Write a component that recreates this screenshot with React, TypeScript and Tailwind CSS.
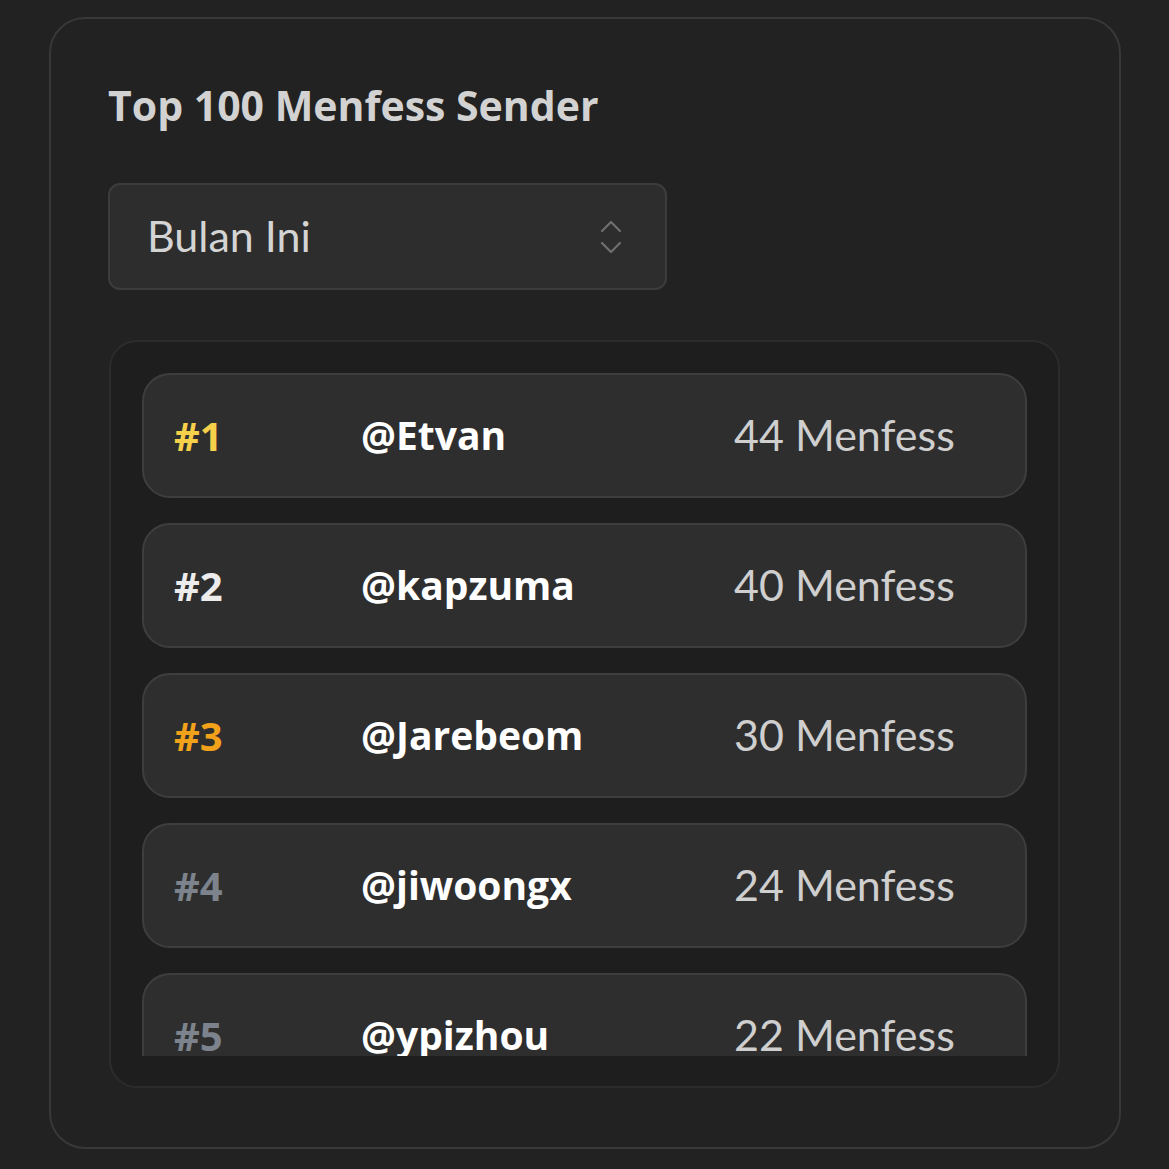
import React from "react";

type Sender = {
  rank: number;
  handle: string;
  count: number;
};

const senders: Sender[] = [
  { rank: 1, handle: "@Etvan", count: 44 },
  { rank: 2, handle: "@kapzuma", count: 40 },
  { rank: 3, handle: "@Jarebeom", count: 30 },
  { rank: 4, handle: "@jiwoongx", count: 24 },
  { rank: 5, handle: "@ypizhou", count: 22 },
];

const rankColors: Record<number, string> = {
  1: "text-[#f6cf4b]",
  2: "text-[#ececec]",
  3: "text-[#f2a11a]",
};

function ChevronUpDown() {
  return (
    <svg width="24" height="38" viewBox="0 0 24 38" fill="none" className="text-[#6f6f6f]">
      <path d="M3 13 L12 4 L21 13" stroke="currentColor" strokeWidth="2.2" strokeLinecap="round" strokeLinejoin="round" />
      <path d="M3 25 L12 34 L21 25" stroke="currentColor" strokeWidth="2.2" strokeLinecap="round" strokeLinejoin="round" />
    </svg>
  );
}

function SenderRow({ sender }: { sender: Sender }) {
  const color = rankColors[sender.rank] ?? "text-[#7c838c]";
  return (
    <div className="shrink-0 h-[125px] rounded-[28px] bg-[#2e2e2e] border-2 border-[#3e3e3e] flex items-center pl-[30px]">
      <span className={`w-[187px] text-[40px] font-bold font-['Open_Sans',sans-serif] ${color}`}>#{sender.rank}</span>
      <span className="w-[373px] text-[39px] font-bold font-['Open_Sans',sans-serif] text-white">{sender.handle}</span>
      <span className="text-[43px] text-[#cfcfcf]">{sender.count} Menfess</span>
    </div>
  );
}

export default function App() {
  return (
    <div className="min-h-screen bg-[#222222] pt-[17px] pl-[49px] font-['Lato','Noto_Sans',sans-serif]">
      <div className="w-[1072px] h-[1132px] rounded-[36px] border-2 border-[#383838] pl-[57px] pt-[62px]">
        <h1 className="text-[41px] leading-[48px] font-bold text-[#d2d2d2] font-['Open_Sans',sans-serif]">Top 100 Menfess Sender</h1>

        <div className="mt-[54px] w-[559px] h-[107px] rounded-[12px] bg-[#2d2d2d] border-2 border-[#3c3c3c] flex items-center justify-between pl-[37px] pr-[42px]">
          <span className="text-[43px] text-[#d4d4d4]">Bulan Ini</span>
          <ChevronUpDown />
        </div>

        <div className="mt-[50px] ml-[1px] w-[951px] h-[748px] rounded-[28px] bg-[#1e1e1e] border-2 border-[#2c2c2c] px-[31px] pt-[31px]">
          <div className="h-[683px] overflow-hidden flex flex-col gap-[25px]">
            {senders.map((s) => (
              <SenderRow key={s.rank} sender={s} />
            ))}
          </div>
        </div>
      </div>
    </div>
  );
}
